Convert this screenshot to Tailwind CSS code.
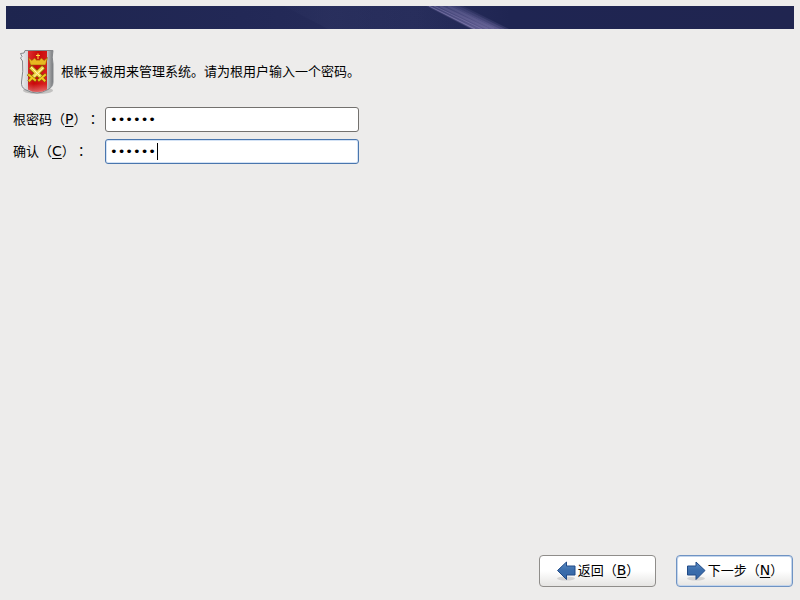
<!DOCTYPE html>
<html lang="zh-CN">
<head>
    <meta charset="UTF-8">
    <meta name="viewport" content="width=device-width, initial-scale=1.0">
    <title>根密码</title>
    <script src="https://cdn.jsdelivr.net/npm/@tailwindcss/browser@4"></script>
</head>
<body class="min-h-screen flex flex-col bg-[#edeceb] p-1.5 text-[13px] leading-5 text-black font-['DejaVu_Sans','Noto_Sans_CJK_SC',sans-serif] [text-spacing-trim:space-all]">

    <!-- Banner -->
    <header class="h-[23px] bg-[#20264f]">
        <svg class="block w-full h-full" viewBox="0 0 788 23" preserveAspectRatio="none" aria-hidden="true">
            <defs>
                <linearGradient id="banner" x1="0" x2="1" y1="0" y2="0">
                    <stop offset="0" stop-color="#1e254f"/>
                    <stop offset=".3" stop-color="#222856"/>
                    <stop offset=".52" stop-color="#272d5b"/>
                    <stop offset=".64" stop-color="#1f2552"/>
                    <stop offset="1" stop-color="#202550"/>
                </linearGradient>
                <linearGradient id="glow" x1="0" x2="1" y1="0" y2="0">
                    <stop offset="0" stop-color="#353c6a" stop-opacity=".1"/>
                    <stop offset=".25" stop-color="#353c6a" stop-opacity=".25"/>
                    <stop offset="1" stop-color="#2a305e" stop-opacity="0"/>
                </linearGradient>
                <linearGradient id="beam" x1="0" x2="0" y1="0" y2="1">
                    <stop offset="0" stop-color="#4a4c80"/>
                    <stop offset="1" stop-color="#726ca2"/>
                </linearGradient>
            </defs>
            <path fill="url(#banner)" d="M0 0h788v23H0z"/>
            <path fill="url(#glow)" d="M278 0h140l46 23H322z"/>
            <path fill="url(#beam)" opacity=".25" d="M420 0h37l46 23h-38z"/>
            <path fill="url(#beam)" opacity=".35" d="M421 0h32l46 23h-33z"/>
            <path fill="url(#beam)" opacity=".45" d="M422 0h26l46 23h-27z"/>
            <g stroke="#9a93c4" fill="none">
                <path opacity=".5" d="M423 0l46 23"/>
                <path opacity=".35" d="M428 0l48 23"/>
                <path opacity=".2" stroke-width="2" d="M434 0l48 23"/>
                <path opacity=".15" stroke-width="2" d="M442 0l46 23"/>
            </g>
        </svg>
    </header>

    <!-- Root password form -->
    <form id="rootForm" class="flex-1 px-[7px] pt-5">
        <div class="flex items-center gap-1.5 pl-1.5">
            <svg class="w-9 h-[46px] shrink-0" viewBox="0 0 36 46" aria-hidden="true">
                <defs>
                    <linearGradient id="silver" x1="0" x2="1" y1="0" y2="0">
                        <stop offset="0" stop-color="#f4f4f4"/>
                        <stop offset=".3" stop-color="#c4c5c8"/>
                        <stop offset=".75" stop-color="#dcdcde"/>
                        <stop offset="1" stop-color="#77797b"/>
                    </linearGradient>
                    <linearGradient id="red" x1="0" x2="1" y1="0" y2=".3">
                        <stop offset="0" stop-color="#e03030"/>
                        <stop offset=".5" stop-color="#c80a0a"/>
                        <stop offset="1" stop-color="#d81c1c"/>
                    </linearGradient>
                    <linearGradient id="shine" x1="0" x2="0" y1="0" y2="1">
                        <stop offset=".8" stop-color="#fff" stop-opacity="0"/>
                        <stop offset="1" stop-color="#fff" stop-opacity=".35"/>
                    </linearGradient>
                </defs>
                <ellipse cx="19" cy="41.500" rx="15" ry="3.500" fill="#000" opacity=".18"/>
                <path d="M6 1.500H34Q32.500 8 34 15V33Q34 38 29 40.500Q23 44 18 44Q12 44 6 40.500Q2 38 2.500 33Q4.500 22 3.500 12L1.500 9L3 7.500L1.500 4.500L5 4Z" fill="url(#silver)" stroke="#85878a"/>
                <path d="M9 2h19v38.500q-4 2.500-10 2.500-5 0-9-2.500z" fill="url(#red)"/>
                <path d="M9 2h19v38.500q-4 2.500-10 2.500-5 0-9-2.500z" fill="url(#shine)"/>
                <!-- crown -->
                <path fill="#e8b820" stroke="#8a5200" stroke-width=".5" d="M9.500 8.500l3.500 3 2.500-2.500 2.500 2.500 1-1 1 1 2.500-2.500 2.500 2.500 3.500-3-2 7.500H11.500z"/>
                <path fill="none" stroke="#ffe040" d="M19 4.500v5.500M17 6.500h4"/>
                <!-- crossed swords -->
                <g fill="none" stroke-linecap="square">
                    <path stroke="#8a6200" stroke-width="5" d="M13 19.500l9 8.500M23 19.500L14 28"/>
                    <path stroke="#f2d84a" stroke-width="3.500" d="M13 19.500l9 8.500M23 19.500L14 28"/>
                    <path stroke="#fff6b0" d="M12.500 18.500l9 9M24 19l-9.500 9"/>
                    <path stroke="#8a6200" stroke-width="3" d="M20 31l6-5M16 31l-6-5M23.500 29.500l2 2M12.500 29.500l-2 2"/>
                    <path stroke="#f2c820" stroke-width="2" d="M20 31l6-5M16 31l-6-5M23.500 29.500l2 2M12.500 29.500l-2 2"/>
                </g>
            </svg>
            <p>根帐号被用来管理系统。请为根用户输入一个密码。</p>
        </div>

        <div class="mt-3 grid grid-cols-[92px_254px] gap-y-[7px] items-center">
            <label for="password">根密码（<u class="text-sm leading-5 underline-offset-2">P</u>）<span lang="zh-TW" class="font-['Noto_Sans_CJK_TC',sans-serif]">：</span></label>
            <input type="password" id="password" value="123456" class="h-[25px] w-full rounded-[3px] border border-[#73716e] bg-white px-1 outline-none">

            <label for="confirm">确认（<u class="text-sm leading-5 underline-offset-2">C</u>）<span lang="zh-TW" class="font-['Noto_Sans_CJK_TC',sans-serif]">：</span></label>
            <div class="relative h-[25px]">
                <input type="password" id="confirm" value="123456" class="block h-full w-full rounded-[3px] border border-[#4a76ad] bg-white px-1 shadow-[inset_0_0_0_1px_#d3e2f5] outline-none">
                <span class="absolute left-[52px] top-1 h-[17px] w-px bg-black"></span>
            </div>
        </div>
    </form>

    <!-- Navigation -->
    <footer class="flex justify-end gap-5 pb-[7px] pr-px">
        <button type="button" class="flex h-8 w-[117px] items-center justify-center gap-0.5 rounded-[4px] border border-[#8f8d8a] bg-linear-to-b from-white from-50% to-[#e6e5e3]">
            <svg class="h-5 w-5" viewBox="0 0 20 20" aria-hidden="true">
                <defs>
                    <linearGradient id="blue" x1="0" x2="0" y1="0" y2="1">
                        <stop offset="0" stop-color="#5c8cc4"/>
                        <stop offset=".5" stop-color="#3a6cab"/>
                        <stop offset="1" stop-color="#3668a8"/>
                    </linearGradient>
                </defs>
                <ellipse cx="10" cy="17.500" rx="9" ry="2" fill="#000" opacity=".12"/>
                <path d="M1.500 9.500L10.500 1V5H19V14H10.500V18.500Z" fill="url(#blue)" stroke="#204a87" stroke-linejoin="round"/>
            </svg>
            <span class="pb-0.5">返回（<u class="text-sm leading-5 underline-offset-2">B</u>）</span>
        </button>
        <button type="submit" form="rootForm" class="flex h-8 w-[117px] items-center justify-center gap-0.5 rounded-[4px] border border-[#6f93c3] bg-linear-to-b from-white from-50% to-[#e6e5e3] shadow-[inset_0_0_0_1px_#c3d5ec]">
            <svg class="h-5 w-5" viewBox="0 0 20 20" aria-hidden="true">
                <ellipse cx="10" cy="17.500" rx="9" ry="2" fill="#000" opacity=".12"/>
                <path d="M19 9.500L10 1V5H1.500V14H10V18.500Z" fill="url(#blue)" stroke="#204a87" stroke-linejoin="round"/>
            </svg>
            <span class="pb-0.5">下一步（<u class="text-sm leading-5 underline-offset-2">N</u>）</span>
        </button>
    </footer>

</body>
</html>
